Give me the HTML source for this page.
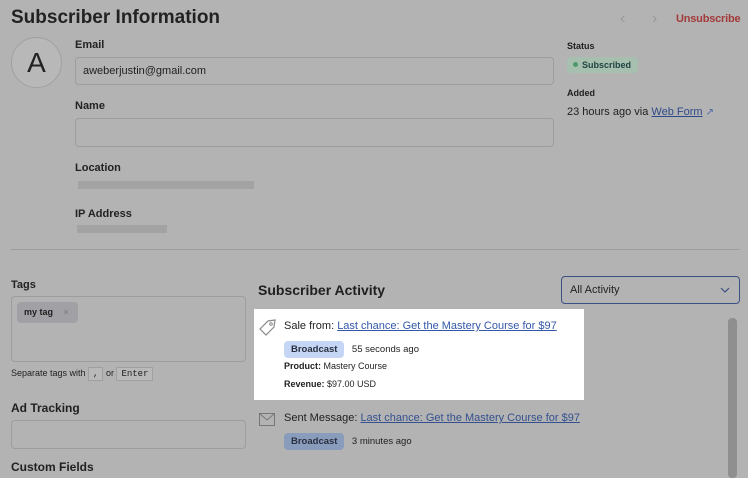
<!DOCTYPE html>
<html><head><style>
*{box-sizing:border-box;margin:0;padding:0}
body{width:748px;height:467px;overflow:hidden;background:#b3b3b3;font-family:"Liberation Sans",sans-serif;color:#1f1f1f;position:relative}
.a{position:absolute}
.lbl{font-size:11px;font-weight:bold;color:#222}
.inp{border:1px solid #9d9d9d;border-radius:4px;background:#b3b3b3}
.blur{background:#a3a3a3;height:8px}
a{color:#2f4a8a}
.badge{background:#c5d6f5;color:#2a2f40;font-size:9.5px;font-weight:bold;border-radius:4px;padding:3px 7px}
</style></head><body>
<div class="a" style="left:11px;top:7px;font-size:19px;font-weight:bold;color:#222">Subscriber Information</div>
<div class="a" style="left:620px;top:10px;color:#999;font-size:16px">&#8249;</div>
<div class="a" style="left:652px;top:10px;color:#999;font-size:16px">&#8250;</div>
<div class="a" style="left:676px;top:13px;color:#a33a3a;font-size:11px;font-weight:bold;letter-spacing:-0.2px">Unsubscribe</div>
<div class="a" style="left:11px;top:37px;width:51px;height:51px;border-radius:50%;border:1px solid #a0a0a0;background:#b8b8b8;text-align:center;line-height:50px;font-size:28px;color:#222">A</div>
<div class="a lbl" style="left:75px;top:39px">Email</div>
<div class="a inp" style="left:75px;top:57px;width:479px;height:28px;font-size:11px;padding:7px 7px">aweberjustin@gmail.com</div>
<div class="a lbl" style="left:75px;top:100px">Name</div>
<div class="a inp" style="left:75px;top:118px;width:479px;height:29px"></div>
<div class="a lbl" style="left:75px;top:162px">Location</div>
<div class="a blur" style="left:78px;top:181px;width:176px"></div>
<div class="a lbl" style="left:75px;top:208px">IP Address</div>
<div class="a blur" style="left:77px;top:225px;width:90px"></div>
<div class="a" style="left:567px;top:41px;font-size:9px;font-weight:bold">Status</div>
<div class="a" style="left:567px;top:57px;width:71px;height:16px;background:#a6bfae;border-radius:4px;font-size:9px;font-weight:bold;padding:3px 0 0 6px;color:#244"><span style="display:inline-block;width:5px;height:5px;border-radius:50%;background:#4f9a6c;margin-right:4px;vertical-align:1px"></span>Subscribed</div>
<div class="a" style="left:567px;top:88px;font-size:9px;font-weight:bold">Added</div>
<div class="a" style="left:567px;top:106px;font-size:11px">23 hours ago via <a style="text-decoration:underline">Web Form</a> <span style="color:#4a66a8;font-size:10px">&#8599;</span></div>
<div class="a" style="left:11px;top:249px;width:729px;height:1px;background:#9e9e9e"></div>
<div class="a lbl" style="left:11px;top:279px">Tags</div>
<div class="a inp" style="left:11px;top:296px;width:235px;height:66px"></div>
<div class="a" style="left:17px;top:302px;width:61px;height:21px;background:#a1a1a5;border-radius:4px;font-size:9px;font-weight:bold;padding:5px 0 0 7px">my tag <span style="color:#777;margin-left:8px;font-weight:normal">×</span></div>
<div class="a" style="left:11px;top:368px;font-size:9px">Separate tags with <span style="border:1px solid #a0a0a0;background:#b9b9b9;font-family:'Liberation Mono';padding:1px 4px">,</span> or <span style="border:1px solid #a0a0a0;background:#b9b9b9;font-family:'Liberation Mono';padding:1px 4px">Enter</span></div>
<div class="a" style="left:11px;top:401px;font-size:12px;font-weight:bold">Ad Tracking</div>
<div class="a inp" style="left:11px;top:420px;width:235px;height:29px"></div>
<div class="a" style="left:11px;top:460px;font-size:12px;font-weight:bold">Custom Fields</div>
<div class="a" style="left:258px;top:282px;font-size:14px;font-weight:bold">Subscriber Activity</div>
<div class="a" style="left:561px;top:276px;width:179px;height:28px;border:1px solid #3b5183;border-radius:4px;font-size:11px;padding:7px 8px">All Activity<svg style="position:absolute;right:9px;top:10px" width="10" height="6" viewBox="0 0 10 6"><path d="M1 1 L5 5 L9 1" fill="none" stroke="#3b5183" stroke-width="1.2"/></svg></div>
<div class="a" style="left:728px;top:318px;width:9px;height:160px;background:#8f8f8f;border-radius:4px"></div>
<div class="a" style="left:254px;top:309px;width:330px;height:91px;background:#fff"></div>
<svg class="a" style="left:258px;top:318px" width="20" height="20" viewBox="0 0 20 20"><path d="M2 11 L10 3 L17 2 L16 9 L8 17 Z" fill="none" stroke="#888" stroke-width="1.2"/><circle cx="13" cy="6" r="1.3" fill="none" stroke="#888"/></svg>
<div class="a" style="left:284px;top:320px;font-size:11px">Sale from: <a style="text-decoration:underline;color:#3357a8">Last chance: Get the Mastery Course for $97</a></div>
<div class="a" style="left:284px;top:339px"><span class="badge">Broadcast</span> <span style="font-size:9.5px;margin-left:3px">55 seconds ago</span></div>
<div class="a" style="left:284px;top:361px;font-size:9px"><b>Product:</b> Mastery Course</div>
<div class="a" style="left:284px;top:379px;font-size:9px"><b>Revenue:</b> $97.00 USD</div>
<svg class="a" style="left:259px;top:413px" width="16" height="13" viewBox="0 0 16 13"><rect x="0.5" y="0.5" width="15" height="12" fill="none" stroke="#777"/><path d="M0.5 0.5 L8 7 L15.5 0.5" fill="none" stroke="#777"/></svg>
<div class="a" style="left:284px;top:412px;font-size:11px">Sent Message: <a style="text-decoration:underline;color:#34508f">Last chance: Get the Mastery Course for $97</a></div>
<div class="a" style="left:284px;top:431px"><span class="badge" style="background:#8a9cbc">Broadcast</span> <span style="font-size:9.5px;margin-left:3px">3 minutes ago</span></div>
</body></html>
